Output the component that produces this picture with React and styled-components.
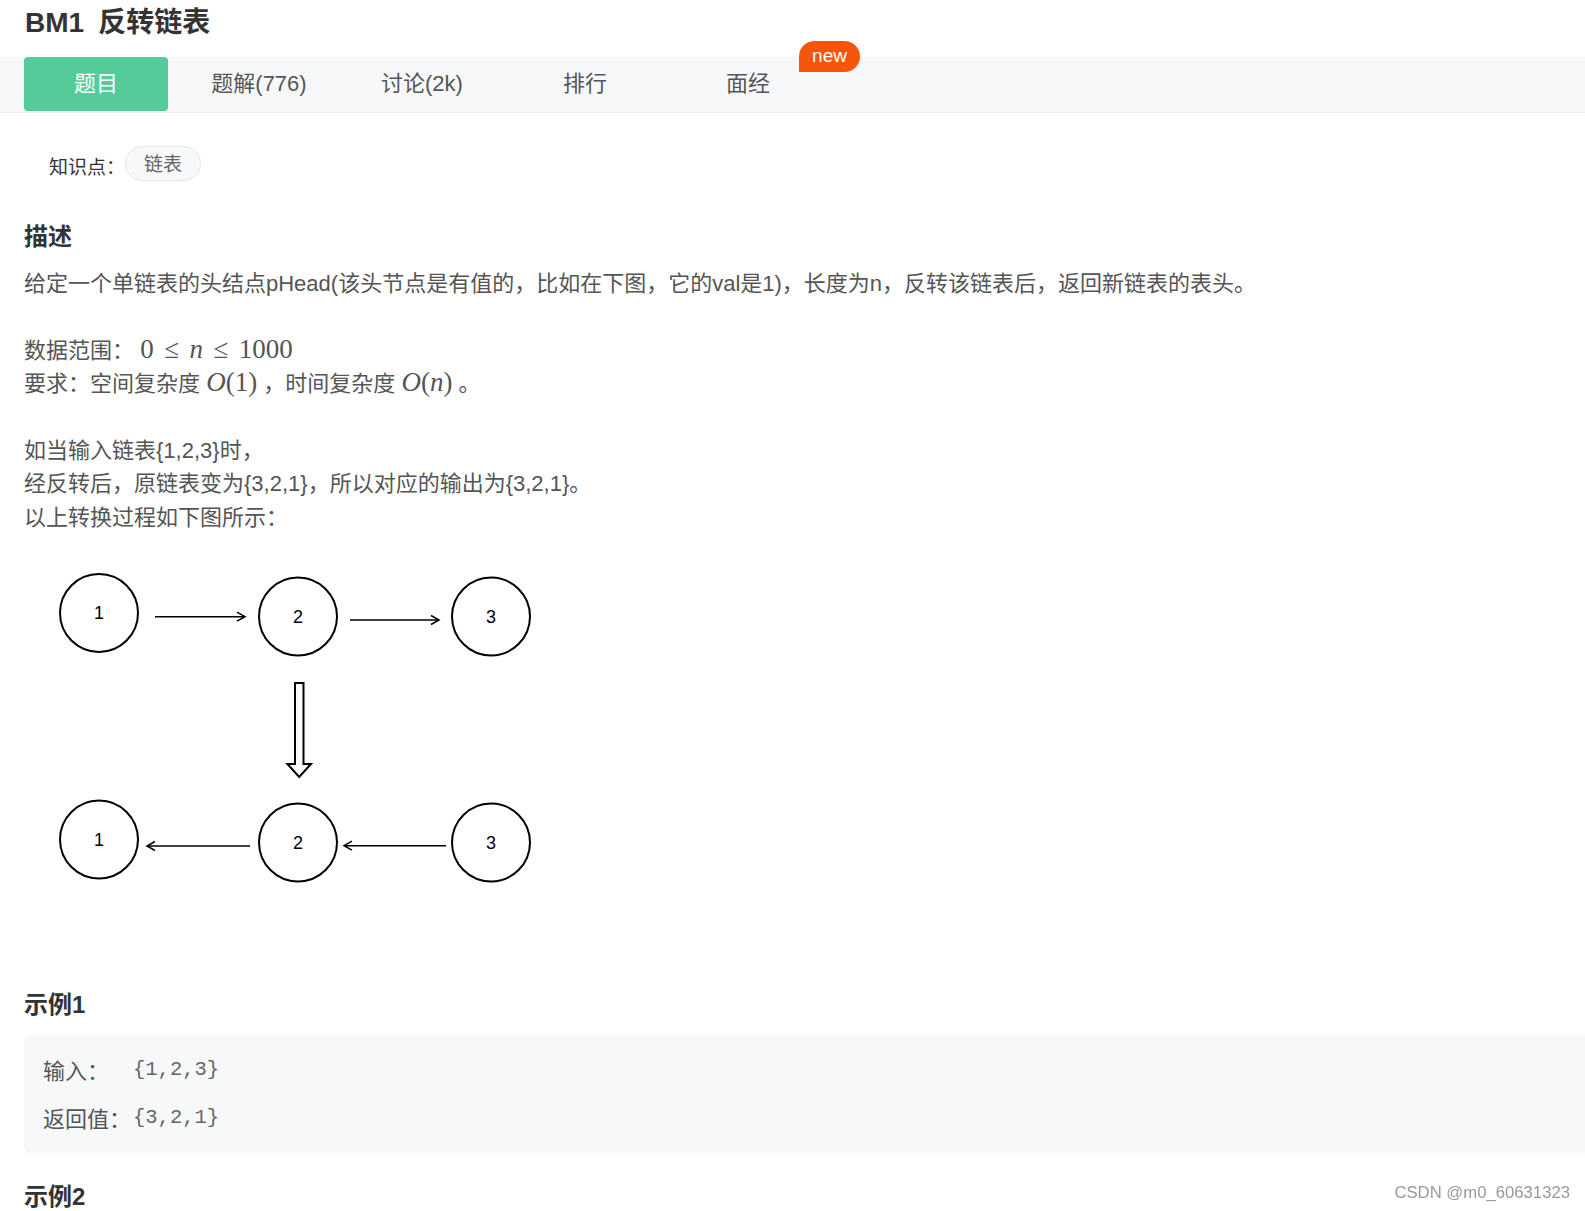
import React from 'react';
import styled, { createGlobalStyle } from 'styled-components';

const GlobalStyle = createGlobalStyle`
	html,
	body {
		margin: 0;
		padding: 0;
		overflow: hidden;
		background: #fff;
		font-family: 'Liberation Sans', 'Noto Sans CJK SC', sans-serif;
	}
`;

const tabs = ['题目', '题解(776)', '讨论(2k)', '排行', '面经'];

// 链表示意图的节点
const topNodes = [
	{ cx: 99, cy: 613, label: '1' },
	{ cx: 298, cy: 616.5, label: '2' },
	{ cx: 491, cy: 616.5, label: '3' },
];
const bottomNodes = [
	{ cx: 99, cy: 839.5, label: '1' },
	{ cx: 298, cy: 842.5, label: '2' },
	{ cx: 491, cy: 842.5, label: '3' },
];

const Arrow = ({ x1, x2, y }) => {
	const dir = x2 > x1 ? -1 : 1;
	return (
		<g stroke="#000" strokeWidth="1.5" fill="none">
			<line x1={x1} y1={y} x2={x2} y2={y} />
			<polyline
				points={`${x2 + dir * 8},${y - 4.5} ${x2},${y} ${x2 + dir * 8},${y + 4.5}`}
			/>
		</g>
	);
};

const Node = ({ cx, cy, label }) => (
	<g>
		<circle cx={cx} cy={cy} r="39" fill="#fff" stroke="#000" strokeWidth="2" />
		<text
			x={cx}
			y={cy}
			textAnchor="middle"
			dominantBaseline="central"
			fontFamily="Liberation Sans, sans-serif"
			fontSize="18"
			fill="#000"
		>
			{label}
		</text>
	</g>
);

const App = () => {
	return (
		<Page>
			<GlobalStyle />
			<Title>
				<span>BM1</span>
				<TitleName>反转链表</TitleName>
			</Title>
			<TabBar>
				{tabs.map((tab, index) => (
					<Tab key={tab} $active={index === 0}>
						{tab}
						{tab === '面经' && <NewBadge>new</NewBadge>}
					</Tab>
				))}
			</TabBar>

			<Content>
				<TagRow>
					<TagLabel>知识点：</TagLabel>
					<Tag>链表</Tag>
				</TagRow>

				<SectionTitle $top={38}>描述</SectionTitle>
				<Desc>
					给定一个单链表的头结点pHead(该头节点是有值的，比如在下图，它的val是1)，长度为n，反转该链表后，返回新链表的表头。
					<br />
					<br />
					数据范围：{' '}
					<Tex>
						0<Rel>≤</Rel>
						<Var>n</Var>
						<Rel>≤</Rel>1000
					</Tex>
					<br />
					要求：空间复杂度{' '}
					<Tex>
						<Var>O</Var>(1)
					</Tex>{' '}
					，时间复杂度{' '}
					<Tex>
						<Var>O</Var>(<Var>n</Var>)
					</Tex>{' '}
					。
					<br />
					<br />
					如当输入链表{'{1,2,3}'}时，
					<br />
					经反转后，原链表变为{'{3,2,1}'}，所以对应的输出为{'{3,2,1}'}。
					<br />
					以上转换过程如下图所示：
				</Desc>

				<Diagram viewBox="24 540 540 360" width="540" height="360">
					{topNodes.map((n) => (
						<Node key={'t' + n.label} {...n} />
					))}
					<Arrow x1={155} x2={245} y={616.7} />
					<Arrow x1={350} x2={439} y={620} />
					<polygon
						points="295,683 303.5,683 303.5,764 311,764 299.2,777 287.4,764 295,764"
						fill="#fff"
						stroke="#000"
						strokeWidth="2"
						strokeLinejoin="miter"
					/>
					{bottomNodes.map((n) => (
						<Node key={'b' + n.label} {...n} />
					))}
					<Arrow x1={250} x2={147} y={846} />
					<Arrow x1={446} x2={344} y={845.7} />
				</Diagram>

				<SectionTitle $top={87}>示例1</SectionTitle>
				<ExampleBox>
					<ExampleRow>
						<ExampleLabel>输入：</ExampleLabel>
						<ExampleValue>{'{1,2,3}'}</ExampleValue>
					</ExampleRow>
					<ExampleRow>
						<ExampleLabel>返回值：</ExampleLabel>
						<ExampleValue>{'{3,2,1}'}</ExampleValue>
					</ExampleRow>
				</ExampleBox>

				<SectionTitle $top={26}>示例2</SectionTitle>
			</Content>

			<Watermark>CSDN @m0_60631323</Watermark>
		</Page>
	);
};

const Page = styled.div`
	width: 100%;
	min-height: 1211px;
	color: #555;
`;

// 题目标题
const Title = styled.h1`
	margin: 0 0 11px;
	padding-left: 25px;
	height: 46px;
	line-height: 46px;
	font-family: 'Liberation Sans', 'Noto Sans CJK SC', sans-serif;
	font-size: 28px;
	font-weight: 700;
	color: #333;
`;

const TitleName = styled.span`
	margin-left: 14px;
`;

const TabBar = styled.nav`
	box-sizing: border-box;
	display: flex;
	align-items: flex-start;
	gap: 19px;
	height: 56px;
	padding-left: 24px;
	background: #f7f8fa;
	border-bottom: 1px solid #eff1f4;
`;

const Tab = styled.div`
	position: relative;
	box-sizing: border-box;
	display: flex;
	align-items: center;
	justify-content: center;
	width: 144px;
	height: 54px;
	padding-bottom: 6px;
	border-radius: 4px;
	font-family: 'Liberation Sans', 'Noto Sans CJK SC', sans-serif;
	font-size: 22px;
	color: ${(p) => (p.$active ? '#fff' : '#555')};
	background: ${(p) => (p.$active ? '#55cb9a' : 'transparent')};
`;

const NewBadge = styled.span`
	position: absolute;
	top: -16px;
	right: -40px;
	width: 61px;
	height: 31px;
	display: flex;
	align-items: center;
	justify-content: center;
	border-radius: 16px 16px 16px 0;
	background: #f5560b;
	color: #fff;
	font-family: 'Liberation Sans', sans-serif;
	font-size: 19px;
	line-height: 1;
	padding-bottom: 2px;
	box-sizing: border-box;
`;

const Content = styled.main`
	padding-left: 24px;
`;

const TagRow = styled.div`
	display: flex;
	align-items: center;
	margin-top: 33px;
	padding-left: 25px;
	height: 35px;
`;

const TagLabel = styled.span`
	font-family: 'Noto Sans CJK SC', sans-serif;
	font-size: 19px;
	color: #333;
	margin-top: 4px;
`;

const Tag = styled.span`
	box-sizing: border-box;
	display: inline-flex;
	align-items: center;
	height: 35px;
	padding: 0 18px 2px;
	border: 1px solid #e4e6eb;
	border-radius: 18px;
	background: #f7f8fa;
	font-family: 'Noto Sans CJK SC', sans-serif;
	font-size: 19px;
	color: #666;
`;

const SectionTitle = styled.h2`
	margin: ${(p) => p.$top}px 0 12px;
	height: 36px;
	line-height: 36px;
	font-family: 'Liberation Sans', 'Noto Sans CJK SC', sans-serif;
	font-size: 24px;
	font-weight: 700;
	color: #333;
`;

const Desc = styled.p`
	margin: 0;
	font-family: 'Liberation Sans', 'Noto Sans CJK SC', sans-serif;
	font-size: 22px;
	line-height: 33.4px;
	color: #555;
`;

// 公式
const Tex = styled.span`
	font-family: 'Liberation Serif', serif;
	font-size: 27px;
	line-height: 1;
	color: #555;
`;

const Var = styled.i`
	font-style: italic;
`;

const Rel = styled.span`
	margin: 0 0.39em;
`;

const Diagram = styled.svg`
	display: block;
	margin-top: 6px;
`;

const ExampleBox = styled.div`
	padding: 10px 19px 12px;
	background: #f7f8fa;
	border-radius: 6px 0 0 6px;
`;

const ExampleRow = styled.div`
	display: flex;
	align-items: center;
	height: 48px;
`;

const ExampleLabel = styled.span`
	width: 90px;
	font-family: 'Noto Sans CJK SC', sans-serif;
	font-size: 22px;
	color: #555;
`;

const ExampleValue = styled.span`
	font-family: 'Liberation Mono', monospace;
	font-size: 20.5px;
	color: #666;
`;

const Watermark = styled.div`
	position: fixed;
	right: 15px;
	bottom: 8px;
	font-family: 'Liberation Sans', sans-serif;
	font-size: 16.7px;
	color: #999;
`;

export default App;
